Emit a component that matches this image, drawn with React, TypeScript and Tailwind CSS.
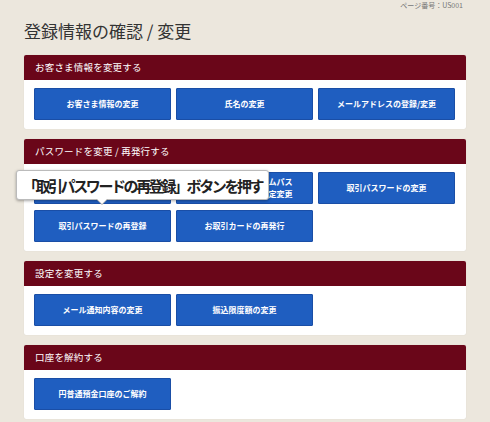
const sections: { title: string; buttons: string[] }[] = [
  {
    title: "お客さま情報を変更する",
    buttons: ["お客さま情報の変更", "氏名の変更", "メールアドレスの登録/変更"],
  },
  {
    title: "パスワードを変更 / 再発行する",
    buttons: [
      "ログインパスワードの変更",
      "トークン（ワンタイムパス\nワード）のご利用設定変更",
      "取引パスワードの変更",
      "取引パスワードの再登録",
      "お取引カードの再発行",
    ],
  },
  {
    title: "設定を変更する",
    buttons: ["メール通知内容の変更", "振込限度額の変更"],
  },
  {
    title: "口座を解約する",
    buttons: ["円普通預金口座のご解約"],
  },
];

const Tooltip = () => (
  <div className="absolute left-[-8px] top-[31px] z-10 w-[253px] h-[30px] bg-white rounded-[3px] border border-[#bbb] shadow-[0_1px_3px_rgba(0,0,0,0.35)] flex items-center justify-center">
    <span className="text-[15px] font-bold text-[#222] tracking-[-2.4px] leading-none whitespace-nowrap">
      「取引パスワードの再登録」ボタンを押す
    </span>
    <div className="absolute left-[79px] bottom-[-6px] w-0 h-0 border-l-[6px] border-r-[6px] border-t-[6px] border-l-transparent border-r-transparent border-t-[#aaa]" />
    <div className="absolute left-[80px] bottom-[-5px] w-0 h-0 border-l-[5px] border-r-[5px] border-t-[5px] border-l-transparent border-r-transparent border-t-white" />
  </div>
);

const Section = ({
  title,
  buttons,
  tooltip,
}: {
  title: string;
  buttons: string[];
  tooltip?: boolean;
}) => (
  <div className="relative bg-white rounded-[2px] shadow-[0_0_1px_rgba(0,0,0,0.15)]">
    <div className="h-[25px] bg-[#6a0619] rounded-t-[2px] flex items-center pl-[11px]">
      <span className="text-[9.5px] text-white tracking-[0.2px]">{title}</span>
    </div>
    <div className="grid grid-cols-3 gap-x-[5px] gap-y-[6px] pl-[10px] pr-[11px] pt-[8px] pb-[9px]">
      {buttons.map((b) => (
        <button
          key={b}
          className="h-[32px] bg-[#1f5ec0] border border-[#1a4ea6] rounded-[1px] text-white text-[8px] font-bold leading-[12px] whitespace-pre-line flex items-center justify-center text-center"
        >
          {b}
        </button>
      ))}
    </div>
    {tooltip && <Tooltip />}
  </div>
);

export default function App() {
  return (
    <div
      className="w-full h-[422px] overflow-hidden bg-[#ece7dd] px-[24px]"
      style={{ fontFamily: '"Noto Sans CJK JP", "Noto Sans", sans-serif' }}
    >
      <div className="flex justify-end pr-[3px] pt-[2px] h-[12px]">
        <span className="text-[7px] text-[#777] leading-none">ページ番号：US001</span>
      </div>
      <h1 className="text-[17px] text-[#333] leading-none mt-[10px] mb-[16px]">
        登録情報の確認 / 変更
      </h1>
      <div className="flex flex-col gap-[10px]">
        {sections.map((s, i) => (
          <Section key={s.title} title={s.title} buttons={s.buttons} tooltip={i === 1} />
        ))}
      </div>
    </div>
  );
}
